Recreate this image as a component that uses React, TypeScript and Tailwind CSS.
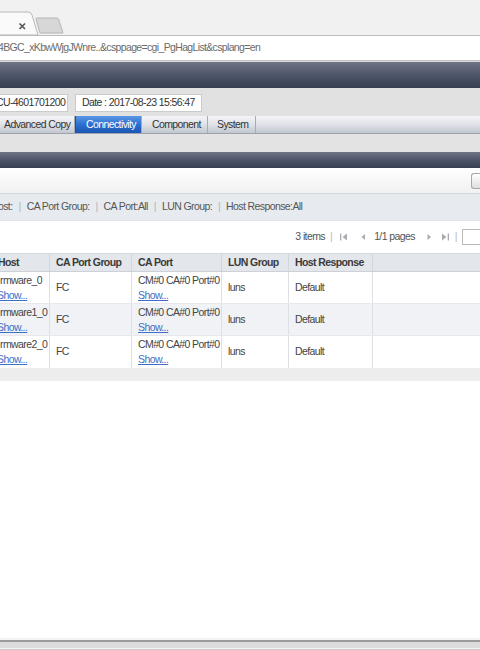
import React from "react";

const font = { fontFamily: '"Liberation Sans", Arial, sans-serif' };

const rows = [
  { host: "rmware_0" },
  { host: "rmware1_0" },
  { host: "rmware2_0" },
];

function BrowserTabs() {
  return (
    <div className="relative h-[36px] bg-[#f1f1f1] border-b border-[#bdbdbd]">
      <svg className="absolute left-0 top-0" width="80" height="36" viewBox="0 0 80 36">
        <path d="M-10 35 L-10 12 L28 12 Q31 12 32 15 L38 35 Z" fill="#fafafa" stroke="#b8b8b8" strokeWidth="1" />
        <path d="M40 33 L36 19 Q35.5 18 37 18 L56 18 Q58 18 58.5 19 L63 33 Z" fill="#d7d7d7" stroke="#b5b5b5" strokeWidth="1" />
        <path d="M19.5 23.5 L25 29 M25 23.5 L19.5 29" stroke="#555" strokeWidth="1.6" />
      </svg>
    </div>
  );
}

function AddressBar() {
  return (
    <div className="h-[25px] bg-white border-b border-[#c4c4c4] flex items-center overflow-hidden">
      <span className="ml-[-2px] text-[10.5px] tracking-[-0.65px] text-[#6b6b6b] whitespace-nowrap">
        4BGC_xKbwWjgJWnre..&amp;csppage=cgi_PgHagList&amp;csplang=en
      </span>
    </div>
  );
}

function DarkBar({ h }: { h: string }) {
  return (
    <div className={`${h} bg-gradient-to-b from-[#6f7584] via-[#4d5568] to-[#363f53]`} />
  );
}

function InfoStrip() {
  return (
    <div className="h-[28px] bg-[#e1e1e1] flex items-center gap-[7px] pt-[1px]">
      <div className="h-[18px] w-[78px] ml-[-10px] bg-white border border-[#cbcbcb] flex items-center pl-[5px] whitespace-nowrap overflow-hidden">
        CU-4601701200
      </div>
      <div className="h-[18px] w-[127px] bg-white border border-[#cbcbcb] flex items-center pl-[6px] whitespace-nowrap">
        Date : 2017-08-23 15:56:47
      </div>
    </div>
  );
}

function MenuTabs() {
  const tabs = [
    { label: "Advanced Copy", w: "w-[75px]", pl: "pl-[4px]" },
    { label: "Connectivity", w: "w-[67px]", pl: "pl-[10px]", active: true },
    { label: "Component", w: "w-[66px]", pl: "pl-[10px]" },
    { label: "System", w: "w-[48px]", pl: "pl-[9px]" },
  ];
  return (
    <div className="h-[18px] flex bg-gradient-to-b from-[#f4f5f7] via-[#dfe2e7] to-[#c3c7cf] border-b border-[#9ea3ad]">
      {tabs.map((t) => (
        <div
          key={t.label}
          className={`${t.w} ${t.pl} h-full flex items-center whitespace-nowrap border-r border-[#a7abb3] ${
            t.active
              ? "bg-gradient-to-b from-[#5b97e4] via-[#2c6fd0] to-[#1b56b3] text-white border-l border-l-[#1b4f9c]"
              : "text-[#333]"
          }`}
        >
          {t.label}
        </div>
      ))}
    </div>
  );
}

function FilterBar() {
  const items = ["Host:", "CA Port Group:", "CA Port:All", "LUN Group:", "Host Response:All"];
  return (
    <div className="h-[28px] bg-[#e7ebf0] border-t border-[#d3d7dd] border-b border-b-[#e4e6ea] flex items-center text-[#555] whitespace-nowrap">
      <div className="flex items-center ml-[-9px]">
        {items.map((it, i) => (
          <React.Fragment key={it}>
            {i > 0 && <span className="mx-[6px] text-[#b0b4ba]">|</span>}
            <span>{it}</span>
          </React.Fragment>
        ))}
      </div>
    </div>
  );
}

function Pager() {
  return (
    <div className="h-[32px] bg-white flex items-center justify-end text-[#555] whitespace-nowrap">
      <span>3 items</span>
      <span className="ml-[5px] text-[#bbb]">|</span>
      <svg width="10" height="10" viewBox="0 0 10 10" className="ml-[7px]">
        <rect x="1" y="1.5" width="1.3" height="7" fill="#a9adb3" />
        <path d="M8 1.5 L3.5 5 L8 8.5 Z" fill="#a9adb3" />
      </svg>
      <svg width="10" height="10" viewBox="0 0 10 10" className="ml-[9px]">
        <path d="M7 2 L3.5 5 L7 8 Z" fill="#a9adb3" />
      </svg>
      <span className="ml-[6px]">1/1 pages</span>
      <svg width="10" height="10" viewBox="0 0 10 10" className="ml-[9px]">
        <path d="M3.5 2 L7 5 L3.5 8 Z" fill="#a9adb3" />
      </svg>
      <svg width="10" height="10" viewBox="0 0 10 10" className="ml-[6px]">
        <path d="M2 1.5 L6.5 5 L2 8.5 Z" fill="#a9adb3" />
        <rect x="7.7" y="1.5" width="1.3" height="7" fill="#a9adb3" />
      </svg>
      <span className="ml-[5px] mr-[5px] text-[#bbb]">|</span>
      <div className="w-[18px] h-[16px] border border-[#b9b9b9] border-r-0 bg-white" />
    </div>
  );
}

function HostTable() {
  const th = "h-full flex items-center border-r border-[#d2d5da] font-bold text-[#3a3a3a] whitespace-nowrap";
  const td = "h-full flex items-center border-r border-[#dcdfe3] whitespace-nowrap";
  return (
    <div className="text-[#444]">
      <div className="h-[19px] flex bg-[#e3e6eb] border-t border-[#d4d7dc] border-b border-b-[#cdd1d7]">
        <div className={`${th} w-[50px] overflow-hidden`}>
          <span className="ml-[-2px]">Host</span>
        </div>
        <div className={`${th} w-[82px] pl-[6px]`}>CA Port Group</div>
        <div className={`${th} w-[90px] pl-[6px]`}>CA Port</div>
        <div className={`${th} w-[67px] pl-[6px]`}>LUN Group</div>
        <div className={`${th} w-[84px] pl-[6px]`}>Host Response</div>
        <div className="flex-1" />
      </div>
      {rows.map((r, i) => (
        <div
          key={r.host}
          className={`h-[32px] flex ${i === 1 ? "bg-[#f0f2f5]" : "bg-white"} ${i < 2 ? "border-b border-[#e6e8eb]" : ""}`}
        >
          <div className={`${td} w-[50px] flex-col items-start justify-center leading-[15px] overflow-hidden`}>
            <span>{r.host}</span>
            <span className="ml-[-3px] text-[#3d6fc6] underline">Show...</span>
          </div>
          <div className={`${td} w-[82px] pl-[6px]`}>FC</div>
          <div className={`${td} w-[90px] pl-[6px] flex-col items-start justify-center leading-[15px]`}>
            <span>CM#0 CA#0 Port#0</span>
            <span className="text-[#3d6fc6] underline">Show...</span>
          </div>
          <div className={`${td} w-[67px] pl-[6px]`}>luns</div>
          <div className={`${td} w-[84px] pl-[6px]`}>Default</div>
          <div className="flex-1" />
        </div>
      ))}
      <div className="h-[13px] bg-[#ededed]" />
    </div>
  );
}

export default function App() {
  return (
    <div
      className="w-[480px] h-[650px] overflow-hidden bg-white flex flex-col text-[10.5px] tracking-[-0.6px] text-[#333]"
      style={font}
    >
      <BrowserTabs />
      <AddressBar />
      <div className="h-[1px] bg-[#d9d9d9]" />
      <DarkBar h="h-[26px]" />
      <InfoStrip />
      <MenuTabs />
      <div className="h-[18px] bg-[#e3e3e3]" />
      <DarkBar h="h-[16px]" />
      <div className="h-[25px] bg-gradient-to-b from-white to-[#f1f1f1] flex justify-end items-center">
        <div className="w-[9px] h-[16px] rounded-l-[3px] border border-r-0 border-[#a9a9a9] bg-gradient-to-b from-white to-[#dedede]" />
      </div>
      <FilterBar />
      <Pager />
      <HostTable />
      <div className="flex-1 bg-white" />
      <div className="h-[2px] bg-[#f4f4f4]" />
      <div className="h-[2px] bg-[#9a9a9a]" />
      <div className="h-[6px] bg-[#dcdcdc]" />
      <div className="h-[1px] bg-[#f5f5f5]" />
      <div className="h-[1px] bg-[#c9c9c9]" />
    </div>
  );
}
